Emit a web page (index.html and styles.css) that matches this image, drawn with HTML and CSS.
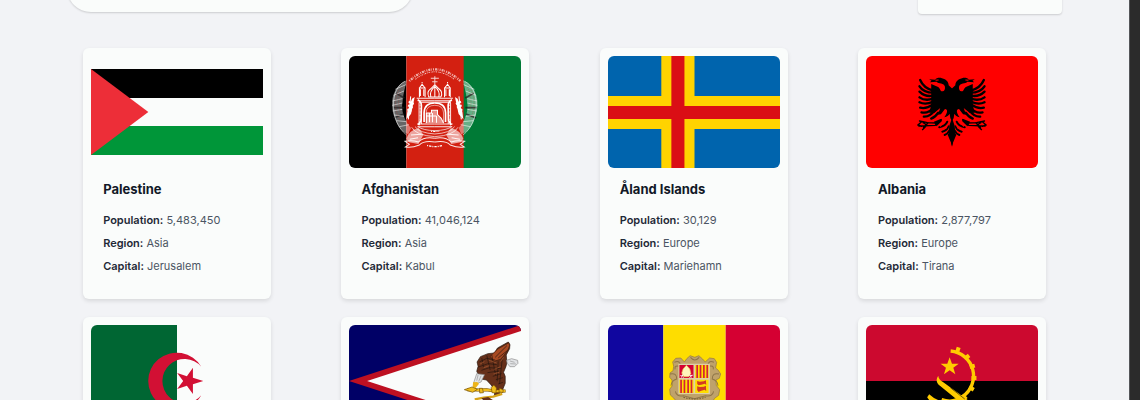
FILE: index.html
```html
<!DOCTYPE html>
<html lang="en">
<head>
<meta charset="utf-8">
<title>Countries</title>
<meta name="viewport" content="width=device-width, initial-scale=1">
<link rel="stylesheet" href="styles.css">
</head>
<body>
<div class="page">
  <header class="toolbar">
    <input class="search" type="search" aria-label="Search for a country">
    <select class="filter" aria-label="Filter by region"><option></option></select>
  </header>
  <main class="grid">
    <article class="card">
      <svg class="flag flag-plain" viewBox="0 0 171 112" preserveAspectRatio="none" aria-hidden="true">
        <path fill="#000" d="M0 13h171v29H0z"/><path fill="#fafcfb" d="M0 42h171v28H0z"/><path fill="#009639" d="M0 70h171v29H0z"/><path fill="#ed2e38" d="M0 13l57 43L0 99z"/>
      </svg>
      <div class="info"><h2 class="name">Palestine</h2>
        <p class="fact"><b>Population:</b> 5,483,450</p><p class="fact"><b>Region:</b> Asia</p><p class="fact"><b>Capital:</b> Jerusalem</p></div>
    </article>
    <article class="card">
      <svg class="flag" viewBox="0 0 171 112" preserveAspectRatio="none" aria-hidden="true">
        <path d="M0 0h57v112H0z"/><path fill="#d32011" d="M57 0h57.500v112H57z"/><path fill="#007a36" d="M114 0h57v112h-57z"/>
        <g transform="translate(35 -1) scale(.3333)" fill="none" stroke="#fff">
          <path stroke-width="7" stroke-dasharray="3 3 6 2 2 4" opacity=".65" d="M75 78Q151 8 227 78"/>
          <path stroke-width="3" stroke-dasharray="4 3 2 2" opacity=".7" d="M93 73Q151 28 209 73"/>
          <path stroke-width="3" opacity=".8" d="M139 70h24M143 80h16M151 64v24"/>
          <g id="af-half">
            <path stroke="none" fill="#fff" opacity=".4" d="M67 76C25 94 12 145 34 196c7 20 20 36 38 42l8-19c-20-22-31-52-25-81 2-24 9-45 12-62z"/>
            <path stroke="#222" stroke-width="5" opacity=".75" d="M35 115l25 14M25 158l35 0M28 189l30-12"/>
            <path stroke-width="2" opacity=".8" d="M62 79C15 100 15 201 67 240M33 103l32-14M28 121l31-13M25 138l29-7M24 151l30-7M26 168l28-5M30 180l29 4M37 197l29 3M45 215l29-6"/>
            <path stroke="#d32011" stroke-width="2" stroke-dasharray="2 4" opacity=".6" d="M43 105q-19 43 3 90M53 97q-17 38-5 75"/>
            <path stroke="none" fill="#fff" d="M83 131l8-5-11 51-14 16 3-23z"/>
            <path stroke-width="6" d="M73 140l15 7M71 151l14 7M69 163l12 6"/>
            <path stroke-width="3" d="M79 124l-7 69"/>
            <path stroke-width="3" d="M105 127V99h17v28M105 99l8-11 9 11M108 103v20M118 103v20M113 85v-4"/>
            <path stroke-width="3" opacity=".9" d="M97 130h54M100 137h51M103 142h48M104 143v68M111 146v62M98 207h53M99 215h52"/>
            <path stroke-width="5" d="M100 134q11 5 11 18l-1 44-8 14M119 201v-28q1-29 32-29"/>
            <path stroke-width="2" opacity=".8" d="M125 205v-31q1-23 26-23M105 151h6M105 161h6M105 171h6M105 182h6M105 193h6"/>
            <path stroke-width="2" d="M82 217q12 24 69 28M92 215q13 19 59 22M101 215q14 11 50 12"/>
            <path stroke="none" fill="#fff" opacity=".6" d="M66 251q8-25 37-32l14 20-15 28-28-5z"/>
            <path stroke-width="3" opacity=".9" d="M151 261q-33-5-46 9-24 10-42 6l12-8-13-9q21-5 40 2 18-17 49-11M76 253l25-5M80 240l31-2"/>
          </g>
          <use href="#af-half" transform="translate(302 0) scale(-1 1)"/>
          <path fill="#d32011" stroke-width="3" d="M133 126q-7-16 5-24l13-13 13 13q12 9 5 24zM139 125q-5-15 12-31 17 16 12 31M151 93v33"/>
          <path fill="#fff" fill-opacity=".5" stroke-width="3" d="M126 204v-30h15v-8h18v13l11 11 7 14M135 174v28M144 174v28M126 183h30M156 183v20"/>
          <path stroke-width="4" stroke-dasharray="3 3 7 3" d="M128 271q23 8 46 0M140 229h24"/>
        </g>
      </svg>
      <div class="info"><h2 class="name">Afghanistan</h2>
        <p class="fact"><b>Population:</b> 41,046,124</p><p class="fact"><b>Region:</b> Asia</p><p class="fact"><b>Capital:</b> Kabul</p></div>
    </article>
    <article class="card">
      <svg class="flag" viewBox="0 0 171 112" preserveAspectRatio="none" aria-hidden="true">
        <path fill="#0064ad" d="M0 0h171v112H0z"/><path fill="#ffd300" d="M53 0h33v40h85v33H86v39H53V73H0V40h53z"/><path fill="#da0e15" d="M63 0h13v50h95v13H76v49H63V63H0V50h63z"/>
      </svg>
      <div class="info"><h2 class="name">Åland Islands</h2>
        <p class="fact"><b>Population:</b> 30,129</p><p class="fact"><b>Region:</b> Europe</p><p class="fact"><b>Capital:</b> Mariehamn</p></div>
    </article>
    <article class="card">
      <svg class="flag" viewBox="0 0 171 112" preserveAspectRatio="none" aria-hidden="true">
        <path fill="#f00" d="M0 0h171v112H0z"/>
        <g transform="translate(43.500 9) scale(.3333)">
          <g id="al-half">
            <path d="M127 71l-11-10c0-10-7-18-20-21-7-3-17-1-20 4l-18-1 7 4-5 5 20-2c5 7 23 3 25 15 1 8-2 13-7 14-8 1-6-10-15-14l-19-8v64l-6 22 15 1 18-15-7 20 9-1 12-16c11 1 6 14-2 25 8-2 13-6 16-11l2 13 3 6-6 17-2 21 11 42z"/>
            <path fill="none" stroke="#000" stroke-width="7" stroke-linecap="round" d="M70 77C52 72 39 64 31 45M70 83c-18 0-32-5-41-19M70 92c-16 3-30-1-41-12M70 101c-15 5-30 4-41-4M70 110c-15 7-29 8-41 2M70 118c-13 9-25 14-39 10M72 127c-10 12-22 19-37 15M76 134c-10 14-21 22-34 21M85 143q-8 13-21 18"/>
            <path fill="none" stroke="#000" stroke-width="4" stroke-linecap="round" d="M94 164l-18 17-49 2M78 174l-25-1-24-5M55 173l-14 14M48 184l-10 10M34 172l-10 8M35 184l-10-5M51 180l-12-8"/>
            <path d="M94 161l-22 9 8 14 16-16z"/>
            <path fill="none" stroke="#000" stroke-width="6" stroke-linecap="round" d="M112 170q-5 13-24 17M115 184q-3 13-18 16M118 197q-4 9-14 13"/>
            <path fill="none" stroke="#f00" stroke-width="3" d="M77 46l9-1M107 165q-12 8-16 20M115 178l-8 13"/>
            <path d="M127 191l-14 18 14 33z"/>
          </g>
          <use href="#al-half" transform="translate(252 0) scale(-1 1)"/>
        </g>
      </svg>
      <div class="info"><h2 class="name">Albania</h2>
        <p class="fact"><b>Population:</b> 2,877,797</p><p class="fact"><b>Region:</b> Europe</p><p class="fact"><b>Capital:</b> Tirana</p></div>
    </article>
    <article class="card">
      <svg class="flag" viewBox="0 0 171 112" preserveAspectRatio="none" aria-hidden="true">
        <path fill="#fafcfb" d="M0 0h171v112H0z"/><path fill="#006633" d="M0 0h85.500v112H0z"/>
        <g transform="translate(-12 -15) scale(.3333)" fill="#d21034">
          <path d="M365 170A85 85 0 1 0 365 256A66 66 0 1 1 365 170z"/>
          <path d="M371 213l-31 10v29l-18-25-29 10 18-24-18-24 29 10 18-26v30z"/>
        </g>
      </svg>
    </article>
    <article class="card">
      <svg class="flag" viewBox="0 0 171 112" preserveAspectRatio="none" aria-hidden="true">
        <path fill="#006" d="M0 0h171v112H0z"/><path fill="#bd1021" d="M171 0L0 56l171 56z"/><path fill="#fafcfb" d="M171 6L18 56l153 50z"/>
        <g transform="translate(-10 -15) scale(.3333)" stroke-linejoin="round">
          <path fill="#66301a" stroke="#29180f" stroke-width="2" d="M411 184l4-15-3-13 10-16 22-9 20-2 9-15 32-18 5 8-1 12-10 19 2 23-3 12-7 17 5 12 0 21-9 22-9 0 2 13h-16l1-14-11-16-14-15-17-3z"/>
          <path fill="#a84a22" stroke="#3c1d0e" stroke-width="2" d="M451 139l23-22 33-19 2 9-5 13-14 19-8 9-20 6z"/>
          <path fill="none" stroke="#26150e" stroke-width="2" d="M466 142l35-35M475 144l28-23M419 156l22-11 25 5M416 171l29-10 26 3M425 181l24-8 34 3M443 188l35-5M459 199l26-8M468 209l21-6M475 222l14-5M426 144l6 32M441 136l10 44M456 135l11 60M475 154l-3 60M487 148l-8 74"/>
          <path fill="none" stroke="#a65a32" stroke-width="2" d="M421 162l13-7M430 174l18-7M448 151l22 8M463 178l19-8M461 192l17-5M491 142l-9 13"/>
          <path fill="#e2e4e6" stroke="#8c8c8c" stroke-width="2" d="M411 191l23 3-10 22-14 5-8-3zM500 151l15-5 18 5 1 9-10 10-14 0-8-10z"/>
          <path fill="none" stroke="#999" stroke-width="2" d="M510 153l14 4M511 161l17 1M415 195l-4 17M424 197l-7 17"/>
          <path fill="#edb51a" d="M400 217l12-1 6 5-11 14-8-4z"/>
          <path fill="none" stroke="#765000" stroke-width="9" d="M383 239l32 1 25-1 28 5 29-1"/>
          <path fill="none" stroke="#f0bd1c" stroke-width="6" d="M382 238l33 2 25-1 28 5 28-1"/>
          <path fill="#f0bd1c" stroke="#765000" stroke-width="2" d="M374 239l23-8 16 7-14 9zM419 235l9 0 3 13-11 1zM454 233l8-8 8 9-2 15-11-1zM479 235l11 4-1 9-12-3z"/>
          <path fill="none" stroke="#d6a318" stroke-width="7" d="M405 268l27-5 28-3 27-8"/>
          <path fill="#66301a" d="M425 265l20-4 19 12-15 16z"/>
        </g>
      </svg>
    </article>
    <article class="card">
      <svg class="flag" viewBox="0 0 171 112" preserveAspectRatio="none" aria-hidden="true">
        <path fill="#10069f" d="M0 0h55v112H0z"/><path fill="#fedd00" d="M55 0h62v112H55z"/><path fill="#d50032" d="M117 0h54v112h-54z"/>
        <g transform="translate(-13 -15) scale(.3333)">
          <path fill="#bfa26b" stroke="#917545" stroke-width="2" d="M274 146l10-9 14 5 12-5 11 10 8 9 13-12 14 2 7 11-3 17 8 7 7 11-4 13-10 5 1 16 10 13-3 17-12 9-10 16-24 14-26 10-26-10-22-14-14-17-10-9-2-17 8-11-1-17-7-8 1-13 9-7 2-13-3-13 9-11 15-1 11 12z"/>
          <path fill="none" stroke="#8f7548" stroke-width="3" d="M285 142q13 16 26 0M237 157q18-8 18 12-19-5-16 9M355 157q-18-8-18 12 19-5 16 9M224 192q20-5 20 15-16 5-17 20M370 192q-20-5-20 15 16 5 17 20M240 244q3 17 24 13l33 9 33-9q21 4 24-13"/>
          <path fill="#ddd0a9" d="M249 161h94v91h-94z"/>
          <path fill="#d50032" d="M252 165h42v39h-42z"/><path fill="#fedd00" d="M299 165h40v39h-40zM252 209h42v40h-42zM299 209h40v40h-40z"/>
          <path stroke="#d52035" stroke-width="5" d="M305 165v39M315 165v39M325 165v39M335 165v39M257 209v40M267 209v40M278 209v40M288 209v40"/>
          <path fill="#fff4bc" stroke="#e3c14c" stroke-width="2" d="M273 166l10 11 3 13-6 10h-15l-6-11 4-12z"/>
          <path stroke="#fff" stroke-width="3" d="M255 196l10 6M291 195l-10 7M257 202l6-8M288 202l-6-8"/>
          <path fill="#d23b23" d="M305 213l8 2 12-1 6-3 1 14-4-4-11 3-8 2-4-4zM305 229l8 2 12-1 6-3 1 17-4-5-11 3-8 4-4-6z"/>
          <path fill="none" stroke="#756039" stroke-width="3" stroke-dasharray="5 3" d="M264 262q32 10 66 0"/>
        </g>
      </svg>
    </article>
    <article class="card">
      <svg class="flag" viewBox="0 0 171 112" preserveAspectRatio="none" aria-hidden="true">
        <path fill="#cc092f" d="M0 0h171v56H0z"/><path d="M0 56h171v56H0z"/>
        <g transform="translate(-11.500 -15) scale(.3333)" fill="#ffcb00">
          <path fill="none" stroke="#ffcb00" stroke-width="10" d="M287 123A75 75 0 0 1 322 260Q295 281 260 269"/>
          <path fill="none" stroke="#ffcb00" stroke-width="12" d="M307 124l4-12M331 145l11-9M344 171l15-4M349 204h15M342 231l14 8M322 255l11 13"/>
          <path d="M284 142l7 19h20l-16 12 6 20-17-12-17 12 6-20-16-12h20z"/>
          <path d="M250 197q1 11 14 19l74 54-15 13-67-55c-13-10-13-20-6-31z"/>
          <path d="M223 253l-6 9q20 30 60 35l26-23q-50 8-80-21z"/>
          <path fill="none" stroke="#2d2100" stroke-width="2" d="M286 233l43 34"/>
        </g>
      </svg>
    </article>
  </main>
</div>
<div class="edge"></div>
</body>
</html>
```
FILE: styles.css
```css
* {
  box-sizing: border-box;
}

body {
  display: flex;
  height: 100vh;
  margin: 0;
  overflow: hidden;
  background: #f2f3f6;
  color: #111827;
  font-family: Inter, "Liberation Sans", sans-serif;
}

.page {
  flex: 1;
  min-width: 0;
}

.edge {
  width: 11px;
  background: #2b2b2b;
  border-left: 1px solid #55565a;
}

/* The toolbar is partly scrolled out above the grid. */
.toolbar {
  display: flex;
  justify-content: space-between;
  align-items: flex-end;
  margin-top: -36px;
  padding: 0 67px;
}

.search,
.filter {
  height: 48px;
  border: 0;
  background: #fafcfb;
  box-shadow: 0 1px 2px rgba(0, 0, 0, 0.16);
  font: inherit;
  appearance: none;
}

.search {
  width: 346px;
  padding: 0 24px;
  border-radius: 24px;
}

.filter {
  width: 144px;
  height: 50px;
  margin-bottom: -2px;
  padding: 0 16px;
  border-radius: 4px;
}

.grid {
  display: grid;
  grid-template-columns: repeat(4, 1fr);
  justify-items: center;
  row-gap: 18px;
  padding: 36px 48px;
}

.card {
  width: 188px;
  padding: 8px;
  border-radius: 6px;
  background: #fafcfb;
  box-shadow: 0 2px 4px rgba(0, 0, 0, 0.11);
}

.flag {
  display: block;
  width: 100%;
  height: 112px;
  border-radius: 6px;
}

.flag-plain {
  border-radius: 0;
}

.info {
  padding: 11px 12px 13px;
}

.name {
  margin: 0 0 10px;
  font-size: 13px;
  font-weight: 700;
  line-height: 20px;
}

.fact {
  margin: 0;
  color: #4b5563;
  font-size: 11px;
  font-weight: 400;
  line-height: 23px;
  white-space: nowrap;
}

.fact b {
  color: #1f2937;
  font-weight: 600;
}
```
